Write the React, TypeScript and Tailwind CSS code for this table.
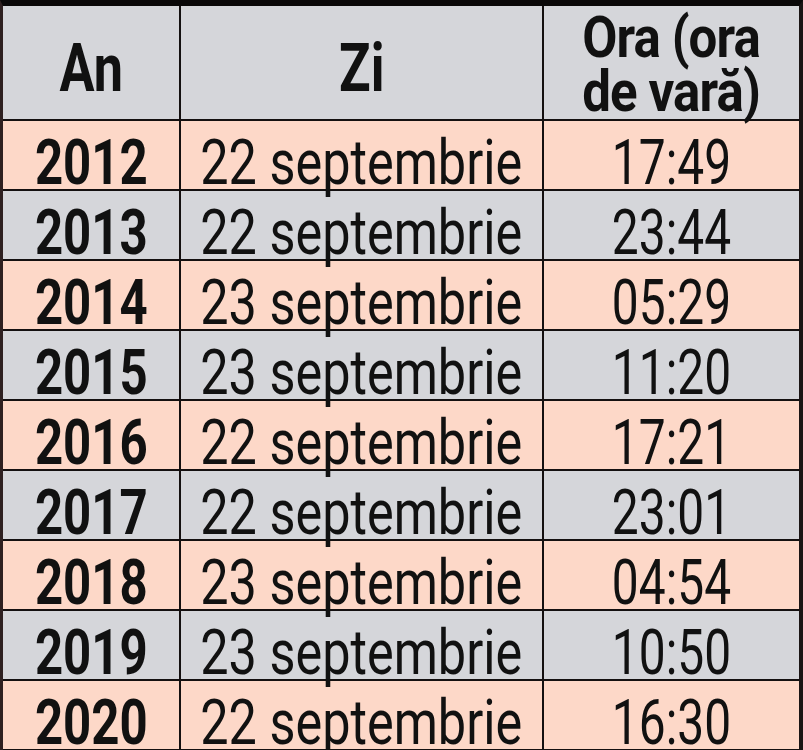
const rows = [
    { an: '2012', zi: '22 septembrie', ora: '17:49' },
    { an: '2013', zi: '22 septembrie', ora: '23:44' },
    { an: '2014', zi: '23 septembrie', ora: '05:29' },
    { an: '2015', zi: '23 septembrie', ora: '11:20' },
    { an: '2016', zi: '22 septembrie', ora: '17:21' },
    { an: '2017', zi: '22 septembrie', ora: '23:01' },
    { an: '2018', zi: '23 septembrie', ora: '04:54' },
    { an: '2019', zi: '23 septembrie', ora: '10:50' },
    { an: '2020', zi: '22 septembrie', ora: '16:30' },
]

const cell = "flex items-center justify-center"

const renderRow = (row: { an: string, zi: string, ora: string }, i: number) => {
    const bg = i % 2 == 0 ? "bg-[#fdd8c8]" : "bg-[#d5d6da]"
    return (
        <div key={row.an} className={`flex h-[70px] shrink-0 border-b-2 border-[#141010] ${bg}`}>
            <div className={`${cell} w-[178px] border-r-2 border-[#141010] pt-[15px]`}>
                <span className="inline-block scale-x-[0.78] font-bold">{row.an}</span>
            </div>
            <div className={`${cell} w-[363px] border-r-2 border-[#141010] pt-[15px]`}>
                <span className="inline-block scale-x-[0.8] whitespace-nowrap">{row.zi}</span>
            </div>
            <div className={`${cell} flex-1 pt-[15px]`}>
                <span className="inline-block scale-x-[0.76]">{row.ora}</span>
            </div>
        </div>
    )
}

export default function App() {
    return (
        <div className="w-[803px] h-[750px] overflow-hidden bg-[#fdd8c8]">
            <div className="flex flex-col h-full border-t-[6px] border-t-[#0a0808] border-l-[3px] border-l-[#2e2020] border-r-[4px] border-r-[#1a1414] text-[63px] leading-none text-[#111]"
                style={{ fontFamily: 'Roboto, "Liberation Sans", sans-serif' }}>
                <div className="flex h-[115px] shrink-0 border-b-2 border-[#141010] bg-[#d5d6da]">
                    <div className={`${cell} w-[178px] border-r-2 border-[#141010] pt-[12px]`}>
                        <span className="inline-block scale-x-[0.79] font-bold text-[66px]">An</span>
                    </div>
                    <div className={`${cell} w-[363px] border-r-2 border-[#141010] pt-[12px]`}>
                        <span className="inline-block scale-x-[0.79] font-bold text-[66px]">Zi</span>
                    </div>
                    <div className={`${cell} flex-1 pt-[2px]`}>
                        <span className="inline-block scale-x-[0.88] font-bold text-[58px] leading-[54px] text-center tracking-[-1px] whitespace-nowrap">
                            Ora (ora<br />de vară)
                        </span>
                    </div>
                </div>
                {rows.map((row, i) => renderRow(row, i))}
            </div>
        </div>
    )
}
